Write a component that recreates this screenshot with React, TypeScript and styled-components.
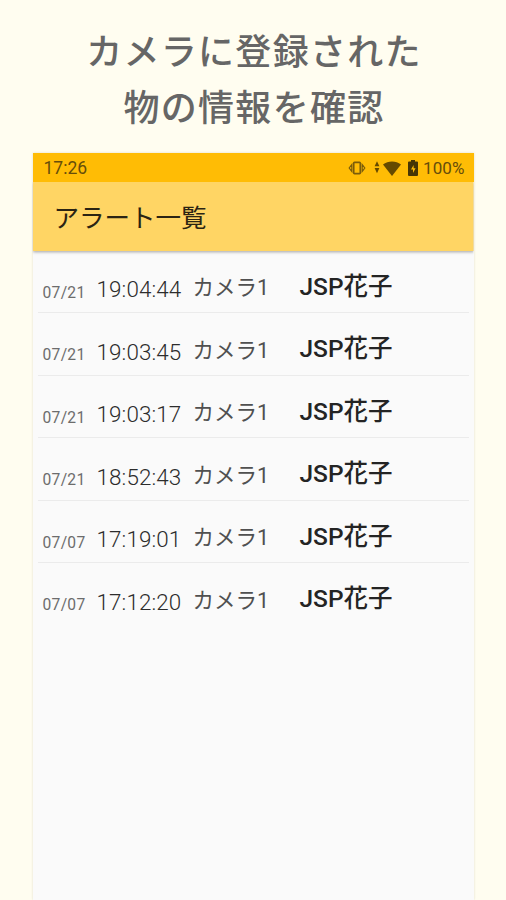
import React from 'react';
import styled, { createGlobalStyle } from 'styled-components';

const Global = createGlobalStyle`
  *{box-sizing:border-box}
  body{margin:0;background:#fffdf0;font-family:Roboto,"Noto Sans CJK JP",sans-serif}
`;

const Page = styled.main`
  height: 900px;
  overflow: hidden;
  background: #fffdf0;
  display: flex;
  flex-direction: column;
  align-items: center;
`;

const Headline = styled.h1`
  margin: 0;
  height: 153px;
  flex: none;
  padding: 21px 0 0 2px;
  color: #666;
  font: 500 36px/56px "Noto Sans CJK JP", sans-serif;
  letter-spacing: 1.3px;
  text-align: center;
  white-space: pre-line;
`;

const Phone = styled.section`
  width: 441px;
  flex: 1;
  background: #fafafa;
  box-shadow: 0 0 2px rgba(120, 110, 60, 0.22);
`;

const StatusBar = styled.div`
  height: 29px;
  padding: 0 9px 0 11px;
  display: flex;
  align-items: center;
  justify-content: space-between;
  background: #ffbc05;
  color: #664d0b;
  font-size: 17.5px;
`;

const StatusIcons = styled.div`
  display: flex;
  align-items: center;
  svg { display: block; }
`;

const Percent = styled.span`
  margin-left: 5px;
  font-size: 17px;
  letter-spacing: 0.1px;
`;

const TitleBar = styled.header`
  height: 69px;
  padding: 0 0 1px 21px;
  display: flex;
  align-items: center;
  background: #ffd564;
  color: #2b2413;
  font: 400 25.5px/40px "Noto Sans CJK JP", sans-serif;
  clip-path: inset(0 0 -6px 0);
  box-shadow: 0 1px 3px rgba(0, 0, 0, 0.35);
`;

const List = styled.ul`
  list-style: none;
  margin: 0;
  margin-top: -0.4px;
  padding: 0 5px;
`;

const Row = styled.li`
  height: 62.5px;
  padding-left: 5px;
  display: grid;
  grid-template-columns: 54px 96px 107px 1fr;
  align-items: start;
  white-space: nowrap;
  border-bottom: 1px solid #ebebeb;
  &:last-child { border-bottom-color: transparent; }
`;

const Cell = styled.span<{ $size: number; $top: number; $color: string; $weight?: number; $spacing?: number }>`
  padding-top: ${(p) => p.$top}px;
  font-size: ${(p) => p.$size}px;
  line-height: 30px;
  color: ${(p) => p.$color};
  font-weight: ${(p) => p.$weight ?? 400};
  letter-spacing: ${(p) => p.$spacing ?? 0}px;
`;

const alerts = [
  ['07/21', '19:04:44'],
  ['07/21', '19:03:45'],
  ['07/21', '19:03:17'],
  ['07/21', '18:52:43'],
  ['07/07', '17:19:01'],
  ['07/07', '17:12:20'],
];

const VibrateSvg = styled.svg`
  margin-right: 8px;
`;

const WifiSvg = styled.svg`
  margin-right: 7px;
`;

const VibrateIcon = () => (
  <VibrateSvg width="18" height="16" viewBox="0 0 18 16" fill="none" stroke="#7a5c0b" strokeWidth="1.7">
    <rect x="5.7" y="2.4" width="6.6" height="11.2" rx="0.8" />
    <path d="M3.8 4.6 1.2 8l2.6 3.4zM14.2 4.6 16.8 8l-2.6 3.4z" strokeWidth="1.2" />
  </VibrateSvg>
);

const WifiIcon = () => (
  <WifiSvg width="27" height="16" viewBox="0 0 27 16" fill="#664a00">
    <path d="M3 1.2 5.4 6.3H.6zM3 13.2.6 8.1h4.8z" />
    <path d="M18 16 9 4.6C14 .4 22 .4 27 4.6z" />
  </WifiSvg>
);

const BatteryIcon = () => (
  <svg width="10" height="16" viewBox="0 0 10 16">
    <path fill="#463505" d="M3 0h4v1.6h2q1 0 1 1V15q0 1-1 1H1q-1 0-1-1V2.6q0-1 1-1h2z" />
    <path fill="#ffbc05" d="M5.6 5 3 9.4h2V13l2.6-4.8h-2z" />
  </svg>
);

export default function App() {
  return (
    <Page>
      <Global />
      <Headline>{'カメラに登録された\n物の情報を確認'}</Headline>
      <Phone>
        <StatusBar>
          <span>17:26</span>
          <StatusIcons>
            <VibrateIcon />
            <WifiIcon />
            <BatteryIcon />
            <Percent>100%</Percent>
          </StatusIcons>
        </StatusBar>
        <TitleBar>アラート一覧</TitleBar>
        <List>
          {alerts.map(([date, time]) => (
            <Row key={time}>
              <Cell $size={15.6} $top={27.3} $color="#6c6c6c" $spacing={0.3}>{date}</Cell>
              <Cell $size={22.4} $top={23.4} $color="#2c2c2c" $weight={300} $spacing={0.12}>{time}</Cell>
              <Cell $size={21.5} $top={22.5} $color="#505050">カメラ1</Cell>
              <Cell $size={24.5} $top={21} $color="#242424" $weight={500}>JSP花子</Cell>
            </Row>
          ))}
        </List>
      </Phone>
    </Page>
  );
}
